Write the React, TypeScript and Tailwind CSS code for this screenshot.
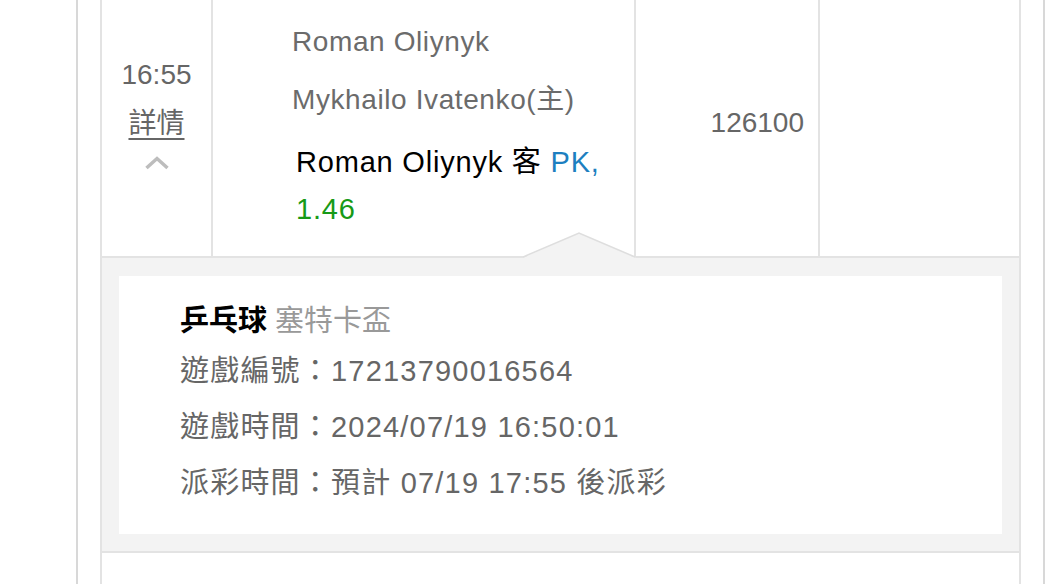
import React from "react";

const FONT = { fontFamily: '"Liberation Sans", "Noto Sans CJK TC", sans-serif' };

function ChevronUp() {
  return (
    <svg width="26" height="15" viewBox="0 0 26 15" fill="none">
      <path d="M2.5 13 L13 3.5 L23.5 13" stroke="#bdbdbd" strokeWidth="3.5" />
    </svg>
  );
}

function Notch() {
  return (
    <svg
      className="absolute left-[421px] top-[232px]"
      width="113"
      height="26"
      viewBox="0 0 113 26"
    >
      <polygon points="0,26 56,1 113,26" fill="#f3f3f3" />
      <polyline points="0,25 56,1 112,25" fill="none" stroke="#dedede" strokeWidth="1.6" />
    </svg>
  );
}

export default function App() {
  return (
    <div className="w-[1056px] h-[584px] bg-white overflow-hidden" style={FONT}>
      <div className="ml-[76px] w-[969px] h-full border-x-2 border-[#d8d8d8] pl-[22px]">
        <div className="w-[921px] h-full border-x-2 border-[#e3e3e3]">
          {/* 比賽列 */}
          <div className="relative flex h-[258px] border-b-2 border-[#e3e3e3]">
            <div className="w-[111px] border-r-2 border-[#e3e3e3] flex flex-col items-center pt-[55px] text-[#666]">
              <div className="text-[28px] leading-[40px]">16:55</div>
              <div className="mt-[9px] text-[28px] leading-[40px] underline underline-offset-[5px] decoration-2">
                詳情
              </div>
              <div className="mt-[11px]">
                <ChevronUp />
              </div>
            </div>
            <div className="w-[423px] border-r-2 border-[#e3e3e3] pl-[79px] pt-[13px]">
              <div className="text-[28px] leading-[58px] tracking-[0.6px] text-[#6b6b6b]">Roman Oliynyk</div>
              <div className="text-[28px] leading-[58px] tracking-[0.6px] text-[#6b6b6b]">Mykhailo Ivatenko(主)</div>
              <div className="mt-[10px] pl-[4px] pr-[20px] text-[29px] leading-[47px] tracking-[0.8px] text-black">
                Roman Oliynyk 客 <span className="text-[#1d7fc0]">PK,</span>{" "}
                <span className="text-[#179a17]">1.46</span>
              </div>
            </div>
            <div className="w-[184px] border-r-2 border-[#e3e3e3] pt-[103px] pr-[14px] text-right text-[28px] leading-[40px] text-[#666]">
              126100
            </div>
            <div className="flex-1" />
            <Notch />
          </div>

          {/* 詳情 */}
          <div className="bg-[#f3f3f3] px-[17px] pt-[18px] pb-[17px] border-b-2 border-[#e3e3e3]">
            <div className="bg-white h-[258px] pl-[61px] pt-[23px] text-[29px] tracking-[1.2px] text-[#666]">
              <div className="leading-[44px] tracking-normal">
                <span className="font-bold text-black">乒乓球</span>{" "}
                <span className="text-[#999]">塞特卡盃</span>
              </div>
              <div className="leading-[56px]">遊戲編號：17213790016564</div>
              <div className="leading-[56px]">遊戲時間：2024/07/19 16:50:01</div>
              <div className="leading-[56px]">派彩時間：預計 07/19 17:55 後派彩</div>
            </div>
          </div>
        </div>
      </div>
    </div>
  );
}
